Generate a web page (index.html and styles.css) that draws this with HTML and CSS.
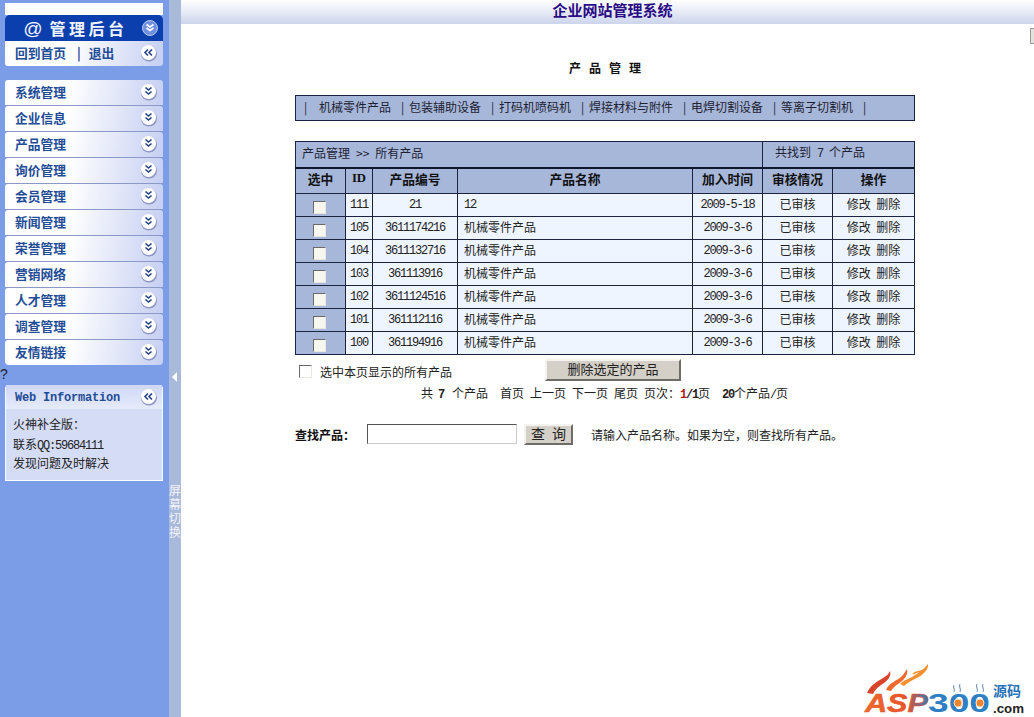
FILE: index.html
```html
<!DOCTYPE html>
<html lang="zh">
<head>
<meta charset="utf-8">
<title>企业网站管理系统</title>
<link rel="stylesheet" href="styles.css">
</head>
<body>
<svg class="defs" width="0" height="0" aria-hidden="true">
  <symbol id="down" viewBox="0 0 18 18">
    <circle cx="9" cy="9.5" r="8" fill="#8d96c4"/>
    <circle cx="8.500" cy="8.500" r="7.500" fill="#fff"/>
    <path d="M5.500 4.500 8.500 7 11.500 4.500M5.500 8.500 8.500 11 11.500 8.500" fill="none" stroke="#23407f" stroke-width="1.600"/>
  </symbol>
  <symbol id="left" viewBox="0 0 18 18">
    <circle cx="9" cy="9.500" r="8" fill="#8d96c4"/>
    <circle cx="8.500" cy="8.500" r="7.500" fill="#fff"/>
    <path d="M8 5.500 5 8.500 8 11.500M12 5.500 9 8.500 12 11.500" fill="none" stroke="#23407f" stroke-width="1.600"/>
  </symbol>
  <linearGradient id="aspfill" x1="0" x2="1" y1="0" y2="0">
    <stop offset="0" stop-color="#ee6a2c"/>
    <stop offset=".65" stop-color="#e8542a"/>
    <stop offset="1" stop-color="#2f78c0"/>
  </linearGradient>
</svg>
<div class="app">
  <aside class="sidebar">
    <div class="top-white"></div>
    <div class="brand"><span class="brand-text"><i>@</i> 管理后台</span>
      <svg class="ico brand-ico" viewBox="0 0 18 18"><circle cx="9" cy="9" r="7.500" fill="#6f8fe0" stroke="#b9c8f2"/><path d="M5.500 5.500 9 8 12.500 5.500M5.500 9 9 11.500 12.500 9" fill="none" stroke="#fff" stroke-width="1.600"/></svg>
    </div>
    <div class="sub"><span class="menu-text">回到首页<span class="sub-sep">|</span>退出</span><svg class="ico"><use href="#left"/></svg></div>
    <nav class="menu">
      <div class="menu-item"><span class="menu-text">系统管理</span><svg class="ico"><use href="#down"/></svg></div>
      <div class="menu-item"><span class="menu-text">企业信息</span><svg class="ico"><use href="#down"/></svg></div>
      <div class="menu-item"><span class="menu-text">产品管理</span><svg class="ico"><use href="#down"/></svg></div>
      <div class="menu-item"><span class="menu-text">询价管理</span><svg class="ico"><use href="#down"/></svg></div>
      <div class="menu-item"><span class="menu-text">会员管理</span><svg class="ico"><use href="#down"/></svg></div>
      <div class="menu-item"><span class="menu-text">新闻管理</span><svg class="ico"><use href="#down"/></svg></div>
      <div class="menu-item"><span class="menu-text">荣誉管理</span><svg class="ico"><use href="#down"/></svg></div>
      <div class="menu-item"><span class="menu-text">营销网络</span><svg class="ico"><use href="#down"/></svg></div>
      <div class="menu-item"><span class="menu-text">人才管理</span><svg class="ico"><use href="#down"/></svg></div>
      <div class="menu-item"><span class="menu-text">调查管理</span><svg class="ico"><use href="#down"/></svg></div>
      <div class="menu-item"><span class="menu-text">友情链接</span><svg class="ico"><use href="#down"/></svg></div>
    </nav>
    <div class="qmark">?</div>
    <section class="info">
      <div class="info-head"><span class="info-title">Web Information</span><svg class="ico"><use href="#left"/></svg></div>
      <div class="info-body">
        <p>火神补全版：</p>
        <p>联系<span class="num">QQ:59684111</span></p>
        <p>发现问题及时解决</p>
      </div>
    </section>
  </aside>
  <div class="strip">
    <span class="strip-arrow"></span>
    <span class="strip-text">屏幕切换</span>
  </div>
  <main class="main">
    <header class="topbar"><h1>企业网站管理系统</h1></header>
    <span class="scroll-nub"></span>
    <div class="content">
      <h2 class="title">产品管理</h2>
      <div class="catbar">
        <span class="sep">|</span><a class="first">机械零件产品</a>
        <span class="sep">|</span><a>包装辅助设备</a>
        <span class="sep">|</span><a>打码机喷码机</a>
        <span class="sep">|</span><a>焊接材料与附件</a>
        <span class="sep">|</span><a>电焊切割设备</a>
        <span class="sep">|</span><a>等离子切割机</a>
        <span class="sep">|</span>
      </div>
      <table class="grid">
        <colgroup>
          <col class="c1"><col class="c2"><col class="c3"><col class="c4"><col class="c5"><col class="c6"><col class="c7">
        </colgroup>
        <tr class="caption-row">
          <td colspan="5" class="left">产品管理 &gt;&gt; 所有产品</td>
          <td colspan="2" class="found">共找到 <span class="num">7</span> 个产品</td>
        </tr>
        <tr class="head-row">
          <th>选中</th><th class="id-head">ID</th><th>产品编号</th><th>产品名称</th><th>加入时间</th><th>审核情况</th><th>操作</th>
        </tr>
        <tr><td class="chk"><input type="checkbox"></td><td class="num">111</td><td class="num">21</td><td class="left num">12</td><td class="num">2009-5-18</td><td>已审核</td><td>修改&nbsp;&nbsp;删除</td></tr>
        <tr><td class="chk"><input type="checkbox"></td><td class="num">105</td><td class="num">3611174216</td><td class="left">机械零件产品</td><td class="num">2009-3-6</td><td>已审核</td><td>修改&nbsp;&nbsp;删除</td></tr>
        <tr><td class="chk"><input type="checkbox"></td><td class="num">104</td><td class="num">3611132716</td><td class="left">机械零件产品</td><td class="num">2009-3-6</td><td>已审核</td><td>修改&nbsp;&nbsp;删除</td></tr>
        <tr><td class="chk"><input type="checkbox"></td><td class="num">103</td><td class="num">361113916</td><td class="left">机械零件产品</td><td class="num">2009-3-6</td><td>已审核</td><td>修改&nbsp;&nbsp;删除</td></tr>
        <tr><td class="chk"><input type="checkbox"></td><td class="num">102</td><td class="num">3611124516</td><td class="left">机械零件产品</td><td class="num">2009-3-6</td><td>已审核</td><td>修改&nbsp;&nbsp;删除</td></tr>
        <tr><td class="chk"><input type="checkbox"></td><td class="num">101</td><td class="num">361112116</td><td class="left">机械零件产品</td><td class="num">2009-3-6</td><td>已审核</td><td>修改&nbsp;&nbsp;删除</td></tr>
        <tr><td class="chk"><input type="checkbox"></td><td class="num">100</td><td class="num">361194916</td><td class="left">机械零件产品</td><td class="num">2009-3-6</td><td>已审核</td><td>修改&nbsp;&nbsp;删除</td></tr>
      </table>
      <div class="bulk">
        <label class="select-all"><input type="checkbox">选中本页显示的所有产品</label>
        <button class="btn del" type="button">删除选定的产品</button>
      </div>
      <div class="pager">
        <span>共</span><b class="num seven">7</b><span>个产品</span>
        <span class="wide">首页</span><span>上一页</span><span>下一页</span><span>尾页</span>
        <span>页次：<b class="num red">1</b><b class="num">/1</b>页</span>
        <span class="wide"><b class="num">20</b>个产品<span class="num">/</span>页</span>
      </div>
      <form class="search">
        <label class="search-label">查找产品：</label>
        <input class="search-input" type="text">
        <button class="btn query" type="button">查 询</button>
        <span class="hint">请输入产品名称。如果为空，则查找所有产品。</span>
      </form>
    </div>
    <svg class="logo" viewBox="0 0 170 54" width="170" height="54" role="img" aria-label="ASP300源码">
      <path d="M3 30C6 22 14 18 19 15 22 13 25 11 26 8 28 14 22 19 17 22 13 25 10 28 9 31Z" fill="#d9442a"/>
      <path d="M22 27C25 20 32 18 37 14 40 11 41 9 43 6 45 12 39 18 34 21 30 24 28 26 27 28Z" fill="#ee6a2c"/>
      <path d="M36 21C41 16 46 16 51 12 56 9 59 7 64 1 65 6 59 12 53 15 47 18 43 20 40 23Z" fill="#f2902f"/>
      <path d="M49 11C52 8 56 9 60 7" fill="none" stroke="#f2902f" stroke-width="1.500"/>
      <text class="logo-asp" x="1" y="49" textLength="63" lengthAdjust="spacingAndGlyphs">ASP</text>
      <text class="logo-300" x="64" y="49" textLength="62" lengthAdjust="spacingAndGlyphs">300</text>
      <circle class="yolk" cx="94" cy="40" r="4"/>
      <circle class="yolk" cx="116" cy="40" r="4"/>
      <path class="steam" d="M90 22C88 25 92 26 90 29M96 21C94 24 98 26 96 29M113 21C111 24 115 26 113 29M119 21C117 24 121 26 119 29"/>
      <text class="logo-cn" x="129" y="33">源码</text>
      <text class="logo-com" x="129" y="50" textLength="31" lengthAdjust="spacingAndGlyphs">.com</text>
    </svg>
  </main>
</div>
</body>
</html>
```

FILE: styles.css
```css
* { box-sizing: border-box; }
html, body { margin: 0; height: 100%; overflow: hidden; }
body {
  font-family: "Noto Sans CJK SC", "Liberation Sans", sans-serif;
  font-size: 12px;
  color: #222;
  background: #fff;
}
.defs { position: absolute; }
.app { display: flex; height: 717px; }

/* Sidebar */
.sidebar {
  width: 169px;
  flex: none;
  background: #7b9ce6;
  padding: 3px 6px 0 5px;
}
.top-white { height: 12px; background: #fff; }
.brand {
  height: 26px;
  background: #0b3fae;
  border-radius: 5px 5px 0 0;
  display: flex;
  align-items: center;
  justify-content: space-between;
  padding: 0 4px 0 18px;
}
.brand-text {
  color: #f2f5ff;
  font-weight: 700;
  font-size: 16px;
  letter-spacing: 3.5px;
  line-height: 26px;
}
.brand-text i { font-family: "Liberation Sans", sans-serif; font-size: 19px; font-weight: 400; letter-spacing: 0; }
.ico { width: 18px; height: 18px; flex: none; }
.sub, .menu-item, .info-head {
  display: flex;
  align-items: center;
  justify-content: space-between;
  background: linear-gradient(100deg, #fff 40%, #c6cff2 100%);
  padding: 0 5px 0 10px;
}
.sub { height: 25px; border-radius: 0 0 3px 3px; padding-bottom: 2px; }
.sub-sep { margin: 0 8px 0 11px; }
.menu-text {
  color: #234c97;
  font-weight: 700;
  font-size: 12.75px;
  white-space: nowrap;
}
.menu { margin-top: 14px; display: flex; flex-direction: column; }
.menu-item { height: 26px; padding-bottom: 2px; border-bottom: 1px solid #8b98c8; border-radius: 3px 3px 0 0; }
.menu-item:last-child { border-bottom: 0; height: 25px; border-radius: 3px 3px 4px 4px; }
.qmark {
  height: 20px;
  margin-left: -5px;
  font-size: 14px;
  line-height: 19px;
  color: #223;
  font-family: "Liberation Sans", sans-serif;
}
.info { background: #d5dcf6; border: 1px solid #fff; border-top: 0; height: 96px; border-radius: 4px 4px 0 0; }
.info-head { height: 24px; background: linear-gradient(180deg, #cfd7f5, #e6ebfb); padding: 0 4px 0 9px; }
.info-title {
  font-family: "Liberation Mono", monospace;
  font-weight: 700;
  font-size: 12px;
  letter-spacing: -.2px;
  color: #234c97;
  padding-top: 2px;
}
.info-body { padding: 5px 0 0 7px; color: #222; }
.info-body p { margin: 0; height: 19.5px; line-height: 19px; }

/* Strip */
.strip {
  width: 12px;
  flex: none;
  background: #a9b9da;
  position: relative;
}
.strip-arrow {
  position: absolute;
  top: 372px;
  left: 3px;
  border-style: solid;
  border-width: 5px 5px 5px 0;
  border-color: transparent #fff transparent transparent;
}
.strip-text {
  position: absolute;
  top: 483px;
  left: 0;
  width: 12px;
  color: #f2f4fb;
  line-height: 14px;
  font-size: 12px;
  word-break: break-all;
}

/* Main */
.main { flex: 1; position: relative; min-width: 0; }
.topbar {
  height: 24px;
  background: linear-gradient(180deg, #fff, #cdd5ec);
  display: flex;
  justify-content: center;
  padding-left: 10px;
}
.topbar h1 {
  margin: 0;
  font-size: 15px;
  line-height: 20px;
  font-weight: 700;
  color: #2a0c84;
}
.scroll-nub {
  position: absolute;
  right: 0;
  top: 28px;
  width: 4px;
  height: 16px;
  background: #e4e2dc;
  border: 1px solid #999;
  border-right: 0;
}
.content { width: 620px; margin-left: 114px; }
.title {
  margin: 0;
  padding-top: 34px;
  padding-left: 8px;
  height: 71px;
  text-align: center;
  font-size: 12px;
  line-height: 20px;
  font-weight: 700;
  letter-spacing: 8px;
  color: #111;
}
.catbar {
  height: 26px;
  background: #a7b7d9;
  border: 1px solid #1b2340;
  display: flex;
  align-items: center;
  padding: 0 0 3px 8px;
  color: #1d2233;
  white-space: nowrap;
}
.catbar a { padding-right: 10px; }
.catbar a.first { margin-left: 7px; }
.sep { width: 2px; margin-right: 6px; }

/* Table */
.grid {
  margin-top: 20px;
  width: 619px;
  border-collapse: collapse;
  table-layout: fixed;
  border: 1px solid #1b2340;
  color: #222;
}
.c1 { width: 50px; }
.c2 { width: 27px; }
.c3 { width: 85px; }
.c4 { width: 235px; }
.c5 { width: 70px; }
.c6 { width: 70px; }
.c7 { width: 82px; }
.grid td, .grid th {
  border: 1px solid #1b2340;
  height: 23px;
  padding: 0 0 4px;
  text-align: center;
  background: #eff5ff;
  font-weight: 400;
}
.grid td.num { padding-bottom: 1px; }
.grid td.left { text-align: left; padding-left: 6px; }
.caption-row td { height: 26px; background: #a7b7d9; border-bottom: 2px solid #10182e; color: #1d2233; word-spacing: 3.3px; }
.grid td.found { text-align: left; padding-left: 12px; }
.head-row th { height: 26px; background: #a7b7d9; font-weight: 700; font-size: 12.75px; color: #111; }
.head-row .id-head { font-family: "Liberation Serif", serif; }
.grid td.chk { background: #a7b7d9; padding: 0 2px 0 0; }
.num {
  font-family: "Liberation Mono", monospace;
  font-size: 12px;
  letter-spacing: -1.2px;
}
.grid input, .select-all input {
  appearance: none;
  display: inline-block;
  margin: 0;
  width: 13px;
  height: 13px;
  background: #f7f7f0;
  border: 1px solid;
  border-color: #6a6a6a #e8e8e0 #e8e8e0 #6a6a6a;
  vertical-align: middle;
}

.bulk {
  display: flex;
  justify-content: space-between;
  align-items: center;
  height: 22px;
  margin-top: 4px;
  padding-left: 4px;
  padding-right: 234px;
}
.select-all { display: flex; align-items: center; gap: 8px; margin-top: 2px; }
.select-all input { background: #fff; }
.btn {
  font: inherit;
  padding: 0;
  color: #222;
  background: #d4d0c8;
  border: 2px solid;
  border-color: #f4f3ef #6e6c66 #6e6c66 #f4f3ef;
}
.del { width: 136px; height: 22px; line-height: 14px; font-size: 13px; padding-bottom: 3px; }
.pager {
  display: flex;
  justify-content: center;
  align-items: baseline;
  gap: 6px;
  height: 16px;
  margin-top: 3px;
  padding-right: 1px;
}
.pager b { font-weight: 700; }
.pager .red { color: #b01818; }
.pager .wide { margin-left: 6px; }
.pager .seven { margin: 0 2px 0 -1px; }
.search {
  display: flex;
  align-items: center;
  height: 22px;
  margin-top: 23px;
}
.search-label { font-weight: 700; width: 72px; flex: none; color: #111; }
.search-input {
  width: 150px;
  height: 20px;
  padding: 0;
  background: #fff;
  border: 1px solid;
  border-color: #555 #ccc #ccc #555;
}
.query { width: 49px; height: 21px; margin-left: 7px; font-size: 14px; line-height: 14px; word-spacing: 4px; padding-bottom: 5px; }
.hint { margin-left: 18px; white-space: nowrap; }

/* Logo */
.logo { position: absolute; left: 683px; top: 663px; }
.logo-asp { font: italic 700 26px "Liberation Sans", sans-serif; fill: url(#aspfill); stroke: #e8542a; stroke-width: .5; }
.logo-300 { font: 700 26px "Liberation Sans", sans-serif; fill: #2f7fc4; }
.logo-cn { font: 700 14px/1 "Noto Sans CJK SC", sans-serif; fill: #2a72b8; }
.logo-com { font: 700 12px "Liberation Sans", sans-serif; fill: #222; }
.yolk { fill: #f0832e; stroke: #fbe3c4; stroke-width: 1; }
.steam { fill: none; stroke: #7d9cb8; stroke-width: 1.200; }
```
